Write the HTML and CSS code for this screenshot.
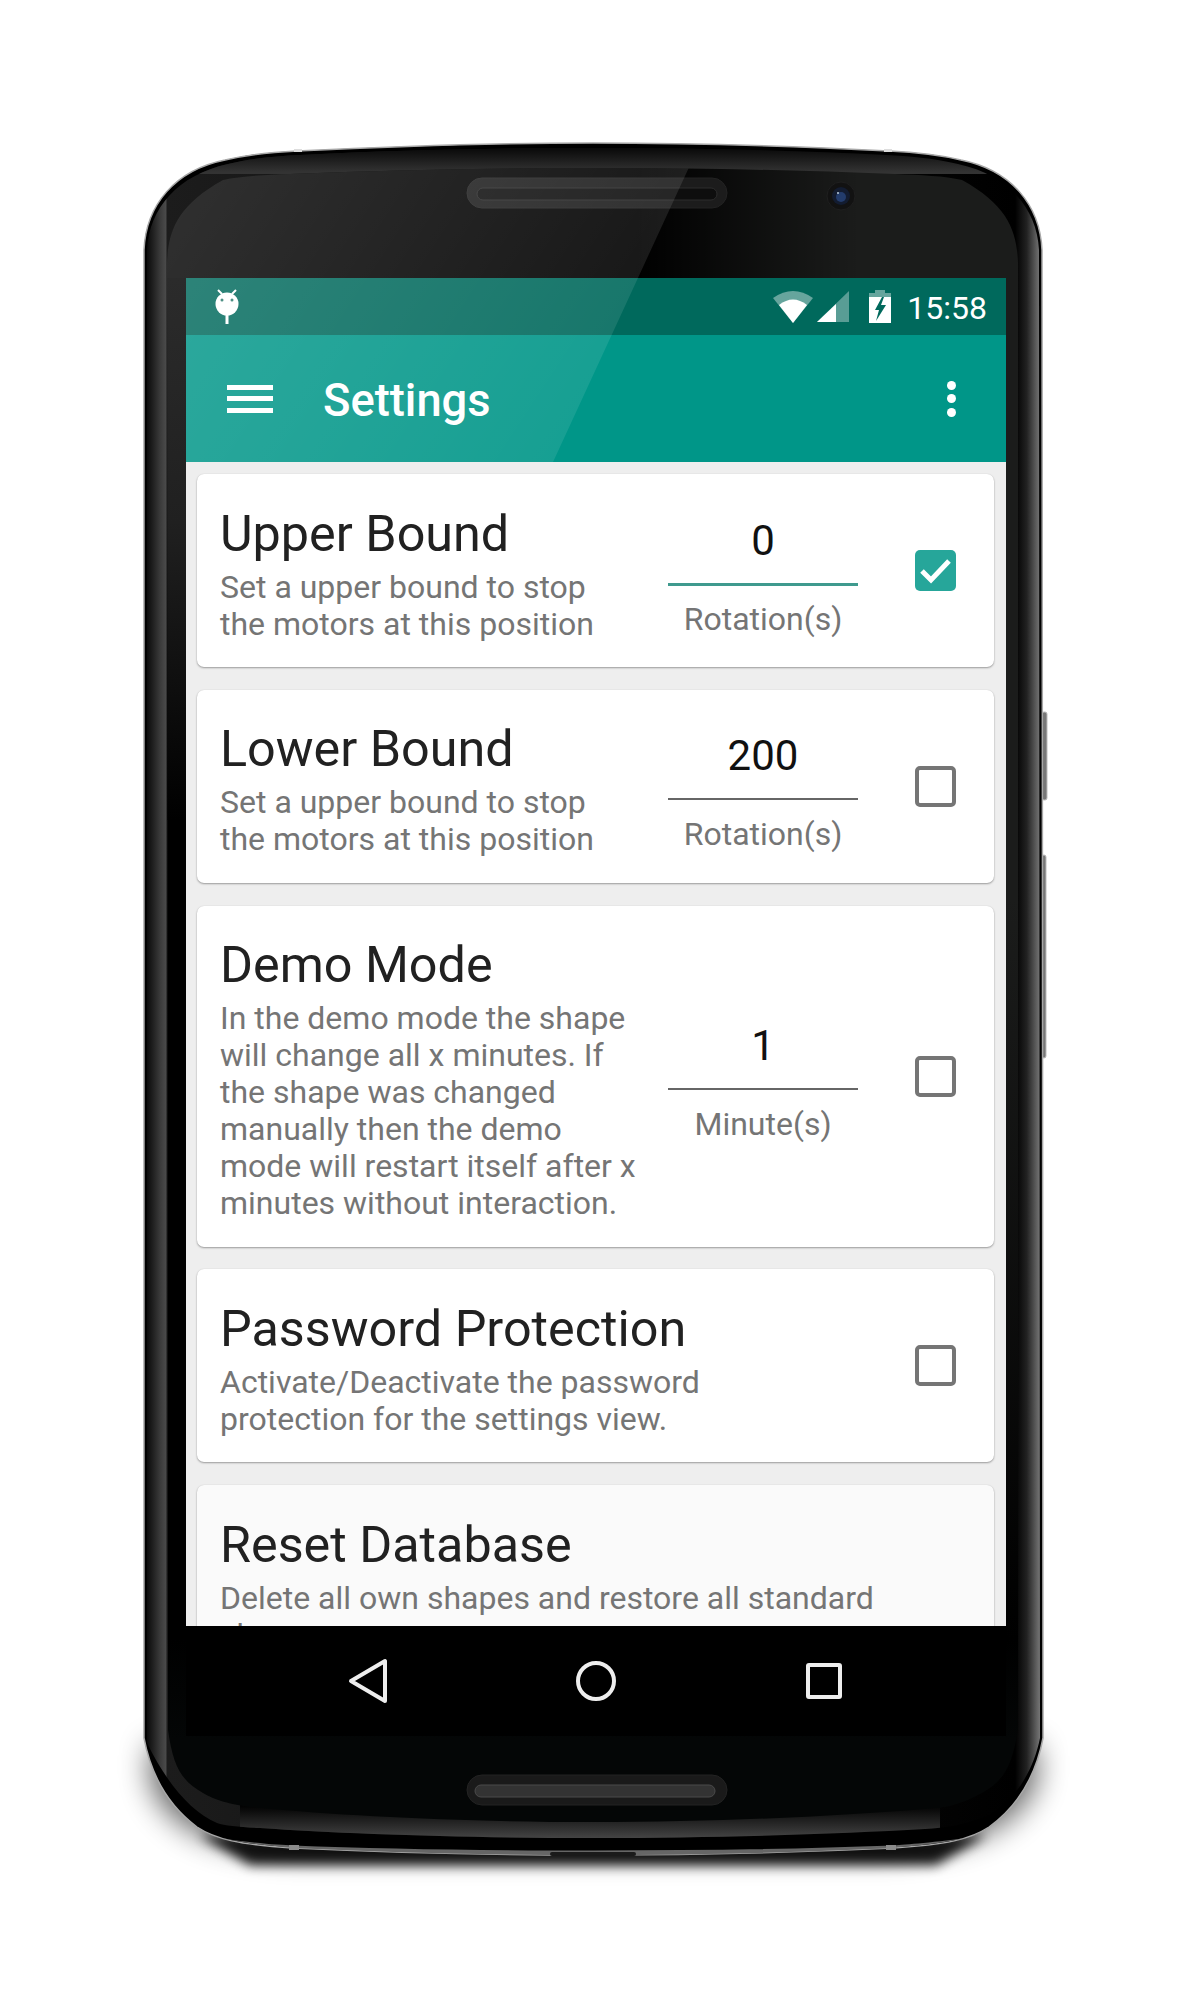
FILE: index.html
```html
<!DOCTYPE html>
<html>
	<head>
		<meta charset="UTF-8">
		<title>Settings</title>
		<link rel="stylesheet" href="styles.css">
	</head>
	<body>
		<div class="phone">
			<!-- phone body, drawn behind the screen -->
			<svg class="body-art" width="1191" height="1999" viewBox="0 0 1191 1999">
				<defs>
					<filter id="blurWide" x="-20%" y="-50%" width="140%" height="200%"><feGaussianBlur stdDeviation="15"/></filter>
					<filter id="blurNarrow" x="-20%" y="-50%" width="140%" height="200%"><feGaussianBlur stdDeviation="6"/></filter>
					<linearGradient id="bandH" gradientUnits="userSpaceOnUse" x1="147" y1="0" x2="1042" y2="0">
						<stop offset="0" stop-color="#0a0a0a"/>
						<stop offset="0.0145" stop-color="#3a3a3a"/>
						<stop offset="0.021" stop-color="#4a4a4a"/>
						<stop offset="0.0225" stop-color="#1c1c1c"/>
						<stop offset="0.97" stop-color="#000"/>
						<stop offset="0.983" stop-color="#222"/>
						<stop offset="0.998" stop-color="#777"/>
						<stop offset="1" stop-color="#222"/>
					</linearGradient>
					<linearGradient id="bandTop" gradientUnits="userSpaceOnUse" x1="0" y1="146" x2="0" y2="172">
						<stop offset="0" stop-color="#050505"/>
						<stop offset="1" stop-color="#333"/>
					</linearGradient>
					<linearGradient id="bandBottom" gradientUnits="userSpaceOnUse" x1="0" y1="1805" x2="0" y2="1838">
						<stop offset="0" stop-color="#000"/>
						<stop offset="1" stop-color="#444"/>
					</linearGradient>
					<linearGradient id="faceV" gradientUnits="userSpaceOnUse" x1="0" y1="900" x2="0" y2="1740">
						<stop offset="0" stop-color="#1b1c1b"/>
						<stop offset="0.88" stop-color="#000"/>
						<stop offset="1" stop-color="#040606"/>
					</linearGradient>
					<linearGradient id="faceDark" gradientUnits="userSpaceOnUse" x1="167" y1="0" x2="860" y2="0">
						<stop offset="0" stop-color="#000"/>
						<stop offset="0.68" stop-color="#000"/>
						<stop offset="1" stop-color="#000" stop-opacity="0"/>
					</linearGradient>
					<linearGradient id="sideCol" gradientUnits="userSpaceOnUse" x1="0" y1="278" x2="0" y2="820">
						<stop offset="0" stop-color="#2b2b2b"/>
						<stop offset="0.45" stop-color="#202020"/>
						<stop offset="1" stop-color="#000"/>
					</linearGradient>
					<clipPath id="faceClip">
						<path d="M167 263 C168 230 178 205 223 180 C240 176 265 175 290 174 C390 170 490 168 592 168 C695 168 795 170 895 174 C920 175 945 176 962 180 C1007 205 1017 230 1018 263 L1018 1730 C1012 1765 1005 1780 982 1793 C960 1805 945 1808 925 1809 C840 1816 720 1822 592 1822 C465 1822 345 1816 260 1808 C230 1805 215 1800 203 1793 C180 1780 173 1765 168 1730 Z"/>
					</clipPath>
					<clipPath id="bandClip">
						<path d="M147 250 C149 208 178 175 228 164 C253 158 278 156 300 155 C400 150 500 148 593 148 C690 148 790 150 886 155 C908 156 933 158 958 164 C1008 175 1037 208 1039 250 L1040 1738 C1034 1768 1018 1798 989 1815 C965 1825 945 1828 925 1829 C840 1834 720 1838 593 1838 C465 1838 345 1834 260 1828 C240 1827 225 1826 217 1823 C190 1812 165 1780 147 1743 Z"/>
					</clipPath>
				</defs>

				<path class="shadow-wide" filter="url(#blurWide)" d="M150 1745 L1037 1745 L1037 1780 C1020 1830 960 1850 880 1853 L300 1853 C220 1850 165 1830 150 1780 Z"/>
				<path class="shadow-narrow" filter="url(#blurNarrow)" d="M200 1835 L986 1835 L936 1865 L250 1865 Z"/>

				<rect class="side-key" x="1042" y="712" width="5" height="88" rx="2"/>
				<rect class="side-key" x="1042" y="855" width="4" height="203" rx="2"/>

				<path class="rim" d="M144 250 C146 205 175 170 225 160 C250 154 275 152 297 151 C400 146 500 143 593 143 C690 143 790 146 889 151 C911 152 936 154 961 160 C1011 170 1040 205 1042 250 L1043 1738 C1037 1770 1022 1803 989 1827 C971 1839 946 1845 893 1848 C806 1852 706 1855 593 1855 C480 1855 380 1852 293 1848 C240 1845 215 1839 197 1827 C165 1803 150 1770 144 1738 Z"/>
				<path class="rim-low" d="M220 1838 C260 1846 280 1846 293 1848 C380 1852 480 1855 593 1855 C706 1855 806 1852 893 1848 C906 1846 926 1846 966 1838 C930 1843 900 1845 893 1845.5 C800 1849 700 1850.5 593 1850.5 C480 1850.5 380 1849 293 1845.5 C280 1845 250 1843 220 1838 Z"/>
				<rect class="port" x="550" y="1852" width="86" height="4" rx="2"/>
				<rect class="tick" x="289" y="1845" width="10" height="5"/>
				<rect class="tick" x="886" y="1845" width="10" height="5"/>
				<rect class="tick-top" x="294" y="149" width="8" height="3"/>
				<rect class="tick-top" x="884" y="149" width="8" height="3"/>

				<g clip-path="url(#bandClip)">
					<rect fill="url(#bandH)" x="140" y="140" width="910" height="1720"/>
					<rect fill="url(#bandTop)" x="140" y="146" width="910" height="28"/>
					<rect fill="url(#bandBottom)" x="240" y="1805" width="700" height="35"/>
				</g>

				<g clip-path="url(#faceClip)">
					<rect fill="url(#faceV)" x="160" y="160" width="870" height="1670"/>
					<rect fill="url(#faceDark)" x="160" y="160" width="700" height="1480"/>
					<rect fill="url(#sideCol)" x="160" y="278" width="26" height="542"/>
				</g>

				<rect class="speaker" x="467" y="178" width="260" height="30" rx="15"/>
				<rect class="slot" x="477" y="188" width="240" height="12" rx="6"/>
				<rect class="speaker speaker-low" x="467" y="1775" width="260" height="30" rx="15"/>
				<rect class="slot slot-low" x="475" y="1785" width="240" height="12" rx="6"/>

				<circle class="cam-ring" cx="841" cy="196" r="14"/>
				<circle class="cam-glass" cx="841" cy="196" r="9"/>
				<circle class="cam-lens" cx="841" cy="197" r="5"/>
				<circle class="cam-dot" cx="838" cy="193" r="1"/>
			</svg>

			<div class="screen">
				<div class="status-bar">
					<svg class="bug" width="24" height="35" viewBox="0 0 24 35">
						<path d="M3 1 L7 5 M21 1 L17 5" stroke="#fff" stroke-width="2"/>
						<circle cx="12" cy="15" r="11.5" fill="#fff"/>
						<rect x="10.5" y="26" width="3" height="9" fill="#fff"/>
						<circle cx="7" cy="11" r="1.5" fill="#2c7a6e"/>
						<circle cx="17" cy="11" r="1.5" fill="#2c7a6e"/>
					</svg>
					<svg class="wifi" width="40" height="32" viewBox="0 0 40 32">
						<path d="M0 7 Q20 -7 40 7 L20 32 Z" fill="#fff" fill-opacity="0.4"/>
						<path d="M6 14 Q20 3 34 14 L20 32 Z" fill="#fff"/>
					</svg>
					<svg class="signal" width="32" height="32" viewBox="0 0 32 32">
						<path d="M0 31 L32 0 L32 31 Z" fill="#fff" fill-opacity="0.35"/>
						<path d="M0 31 L19 13 L19 31 Z" fill="#fff"/>
					</svg>
					<svg class="battery" width="22" height="33" viewBox="0 0 22 33">
						<path d="M6 0 H16 V3 H22 V8 H0 V3 H6 Z" fill="#fff" fill-opacity="0.4"/>
						<path d="M0 7 H22 V33 H0 Z" fill="#fff"/>
						<path d="M13 7 L6 20 H10 L7 31 L17 15 H12 L15 7 Z" fill="#00695c"/>
					</svg>
					<span class="time">15:58</span>
				</div>

				<div class="toolbar">
					<div class="menu-icon"><i></i><i></i><i></i></div>
					<div class="toolbar-title">Settings</div>
					<div class="more-icon"><i></i><i></i><i></i></div>
				</div>

				<div class="content">
					<div class="card">
						<div class="info">
							<div class="title">Upper Bound</div>
							<div class="desc">Set a upper bound to stop<br>the motors at this position</div>
						</div>
						<div class="field">
							<div class="value value-on">0</div>
							<div class="unit">Rotation(s)</div>
						</div>
						<div class="check check-on">
							<svg width="41" height="41" viewBox="0 0 41 41"><path d="M7 21 L16 30 L34 11" fill="none" stroke="#fff" stroke-width="5"/></svg>
						</div>
					</div>
					<div class="card">
						<div class="info">
							<div class="title">Lower Bound</div>
							<div class="desc">Set a upper bound to stop<br>the motors at this position</div>
						</div>
						<div class="field">
							<div class="value">200</div>
							<div class="unit">Rotation(s)</div>
						</div>
						<div class="check"></div>
					</div>
					<div class="card">
						<div class="info">
							<div class="title">Demo Mode</div>
							<div class="desc">In the demo mode the shape<br>will change all x minutes. If<br>the shape was changed<br>manually then the demo<br>mode will restart itself after x<br>minutes without interaction.</div>
						</div>
						<div class="field">
							<div class="value">1</div>
							<div class="unit">Minute(s)</div>
						</div>
						<div class="check"></div>
					</div>
					<div class="card">
						<div class="info info-wide">
							<div class="title">Password Protection</div>
							<div class="desc">Activate/Deactivate the password<br>protection for the settings view.</div>
						</div>
						<div class="check"></div>
					</div>
					<div class="card card-off">
						<div class="info info-wide">
							<div class="title">Reset Database</div>
							<div class="desc">Delete all own shapes and restore all standard<br>shapes</div>
						</div>
					</div>
				</div>

				<div class="nav-bar">
					<svg width="40" height="46" viewBox="0 0 40 46"><path d="M37 3 V43 L3 23 Z" fill="none" stroke="#eee" stroke-width="4" stroke-linejoin="round"/></svg>
					<svg width="40" height="40" viewBox="0 0 40 40"><circle cx="20" cy="20" r="18" fill="none" stroke="#eee" stroke-width="4"/></svg>
					<svg width="40" height="40" viewBox="0 0 40 40"><rect x="4" y="4" width="32" height="32" rx="1" fill="none" stroke="#eee" stroke-width="4"/></svg>
				</div>
			</div>

			<!-- the light reflection runs across glass and screen -->
			<svg class="glare" width="1191" height="1999" viewBox="0 0 1191 1999">
				<defs>
					<linearGradient id="glareFill" gradientUnits="userSpaceOnUse" x1="170" y1="170" x2="610" y2="460">
						<stop offset="0" stop-color="#fff" stop-opacity="0.19"/>
						<stop offset="1" stop-color="#fff" stop-opacity="0.08"/>
					</linearGradient>
				</defs>
				<path clip-path="url(#faceClip)" fill="url(#glareFill)" d="M160 150 H697 L553 462 H186 V278 H160 Z"/>
			</svg>
		</div>
	</body>
</html>
```

FILE: styles.css
```css
body{ margin: 0; background: #fff; font-family: Roboto, "Liberation Sans", sans-serif;}

.phone{ position: relative; width: 1191px; height: 1999px; box-sizing: border-box; padding: 278px 185px 263px 186px;}
.body-art{ position: absolute; left: 0; top: 0;}
.glare{ position: absolute; left: 0; top: 0; z-index: 2; pointer-events: none;}

/* phone body */
.shadow-wide{ fill: #000; opacity: 0.6;}
.shadow-narrow{ fill: #000; opacity: 0.9;}
.side-key{ fill: #777; stroke: #bbb; stroke-width: 1;}
.rim{ fill: #000; stroke: #a8a8a8; stroke-width: 1.5;}
.rim-low{ fill: #666;}
.port{ fill: #1a1a1a;}
.tick{ fill: #8a8a8a;}
.tick-top{ fill: #ddd;}
.speaker{ fill: #1c1c1c; stroke: #232323; stroke-width: 1;}
.speaker-low{ fill: #1a1a1a;}
.slot{ fill: #0e0e0e; stroke: #2c2c2c; stroke-width: 1;}
.slot-low{ fill: #333; stroke: #4a4a4a;}
.cam-ring{ fill: #121212; stroke: #1f1f1f; stroke-width: 1;}
.cam-glass{ fill: #131c30;}
.cam-lens{ fill: #233c6c;}
.cam-dot{ fill: #bcd;}

/* screen */
.screen{ position: relative; z-index: 1; height: 100%; display: flex; flex-direction: column; background: #eee;}

.status-bar{ flex: 0 0 57px; display: flex; align-items: center; padding: 0 19px 0 29px; background: #00695c; color: #fff;}
.bug{ margin-right: auto;}
.wifi{ margin-right: 4px;}
.signal{ margin-right: 20px;}
.battery{ margin-right: 16px;}
.time{ padding-top: 2px; font-size: 32px; line-height: 40px;}

.toolbar{ flex: 0 0 127px; display: flex; align-items: center; padding: 0 50px 0 41px; background: #009688; color: #fff;}
.menu-icon{ width: 46px; display: flex; flex-direction: column; gap: 6.5px;}
.menu-icon i{ display: block; height: 5px; background: #fff;}
.toolbar-title{ margin-left: 50px; padding-top: 3px; font-size: 45.3px; font-weight: 500; flex: 1;}
.more-icon{ display: flex; flex-direction: column; gap: 4.5px;}
.more-icon i{ display: block; width: 9px; height: 9px; border-radius: 50%; background: #fff;}

.content{ flex: 1; min-height: 0; overflow: hidden; display: flex; flex-direction: column; gap: 22.8px; padding: 12px 12px 0 11px;}
.card{ flex: none; display: flex; align-items: center; padding: 30.5px 38px 24.5px 23px; background: #fff; border-radius: 7px; box-shadow: 0 1px 2px rgba(0,0,0,.35), 0 0 1px rgba(0,0,0,.12);}
.card-off{ background: #fafafa;}

/* the checkbox and field centre on the whole card, not on the padded box */
.card .field, .card .check{ margin-top: -6px;}

.info{ flex: 0 0 431px;}
.info-wide{ flex: 1;}
.title{ margin-bottom: 7px; font-size: 50.3px; line-height: 57px; color: #212121; white-space: nowrap;}
.desc{ font-size: 32px; line-height: 37px; color: #757575; white-space: nowrap;}

.field{ flex: 0 0 190px; margin-left: 17px; text-align: center;}
.value{ padding: 12px 0 18px; font-size: 42px; line-height: 49px; color: #111; border-bottom: 2px solid #666;}
.value-on{ border-bottom: 3px solid #3f9a8e; margin-bottom: -1px;}
.unit{ margin-top: 16px; font-size: 32px; line-height: 37px; color: #757575;}

.check{ flex: 0 0 41px; height: 41px; box-sizing: border-box; margin-left: 57px; border: 4px solid #757575; border-radius: 5px;}
.info-wide + .check{ margin-left: auto;}
.check-on{ border: 0; background: #26a69a;}
.check-on svg{ display: block;}

.nav-bar{ flex: 0 0 110px; display: flex; align-items: center; justify-content: space-between; padding: 0 162px; background: #000;}
.nav-bar svg{ display: block;}
```
